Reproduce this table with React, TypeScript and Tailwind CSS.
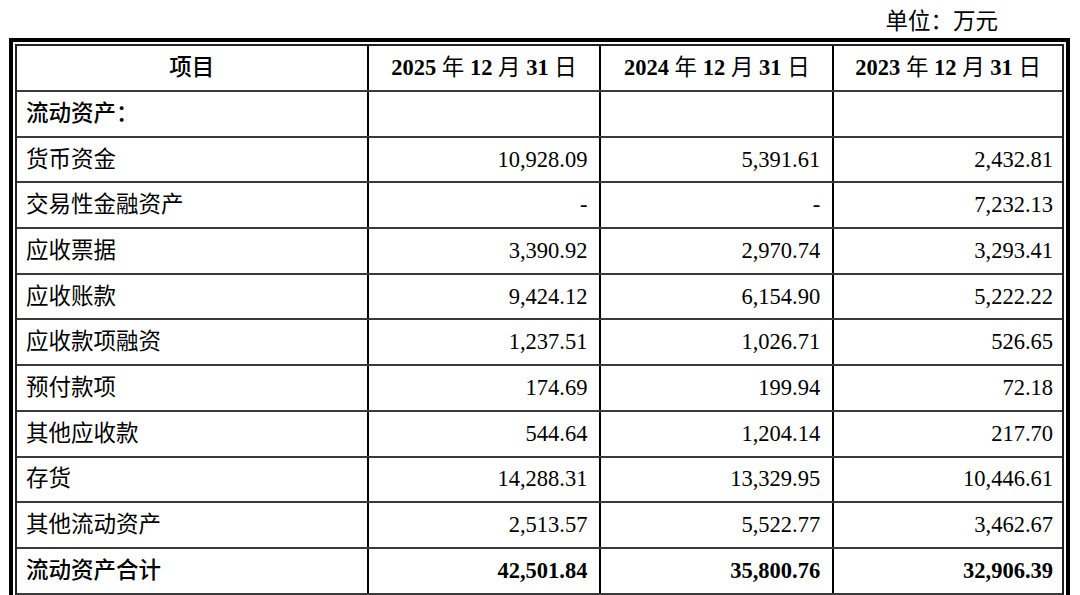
const rows: { name: string; v: string[]; bold?: boolean }[] = [
  { name: "流动资产：", v: ["", "", ""], bold: true },
  { name: "货币资金", v: ["10,928.09", "5,391.61", "2,432.81"] },
  { name: "交易性金融资产", v: ["-", "-", "7,232.13"] },
  { name: "应收票据", v: ["3,390.92", "2,970.74", "3,293.41"] },
  { name: "应收账款", v: ["9,424.12", "6,154.90", "5,222.22"] },
  { name: "应收款项融资", v: ["1,237.51", "1,026.71", "526.65"] },
  { name: "预付款项", v: ["174.69", "199.94", "72.18"] },
  { name: "其他应收款", v: ["544.64", "1,204.14", "217.70"] },
  { name: "存货", v: ["14,288.31", "13,329.95", "10,446.61"] },
  { name: "其他流动资产", v: ["2,513.57", "5,522.77", "3,462.67"] },
  { name: "流动资产合计", v: ["42,501.84", "35,800.76", "32,906.39"], bold: true },
  { name: "", v: ["", "", ""] },
];

const font = { fontFamily: '"Liberation Serif", "Noto Sans CJK SC", serif' };

function Row({ name, v, bold }: { name: string; v: string[]; bold?: boolean }) {
  return (
    <div className="flex h-[45.7px] border-t-2 border-[#3a3a3a]">
      <div className={"w-[350px] flex items-center pl-[9px] " + (bold ? "font-medium" : "")}>{name}</div>
      {v.map((x, i) => (
        <div
          key={i}
          className={
            "flex items-center justify-end border-l-2 border-black " +
            (i === 2 ? "w-[230px] pr-[9px] " : "w-[233px] pr-[12px] ") +
            (bold ? "font-bold" : "")
          }
        >
          {x}
        </div>
      ))}
    </div>
  );
}

function DateHead({ year }: { year: string }) {
  return (
    <>
      <b>{year}</b> 年 <b>12</b> 月 <b>31</b> 日
    </>
  );
}

export default function App() {
  return (
    <div className="w-[1080px] h-[595px] overflow-hidden bg-white text-black text-[22.5px]" style={font}>
      <div className="h-[38px] flex items-center justify-end pr-[82px] pt-[6px]">单位：万元</div>
      <div className="ml-[9px] w-[1061px] border-4 border-black p-[2px]">
        <div className="border-2 border-[#222]">
          <div className="flex h-[44px]">
            <div className="w-[350px] flex items-center justify-center font-medium">项目</div>
            <div className="w-[233px] flex items-center justify-center border-l-2 border-black whitespace-pre">
              <DateHead year="2025" />
            </div>
            <div className="w-[233px] flex items-center justify-center border-l-2 border-black whitespace-pre">
              <DateHead year="2024" />
            </div>
            <div className="w-[230px] flex items-center justify-center border-l-2 border-black whitespace-pre">
              <DateHead year="2023" />
            </div>
          </div>
          {rows.map((r, i) => (
            <Row key={i} {...r} />
          ))}
        </div>
      </div>
    </div>
  );
}
